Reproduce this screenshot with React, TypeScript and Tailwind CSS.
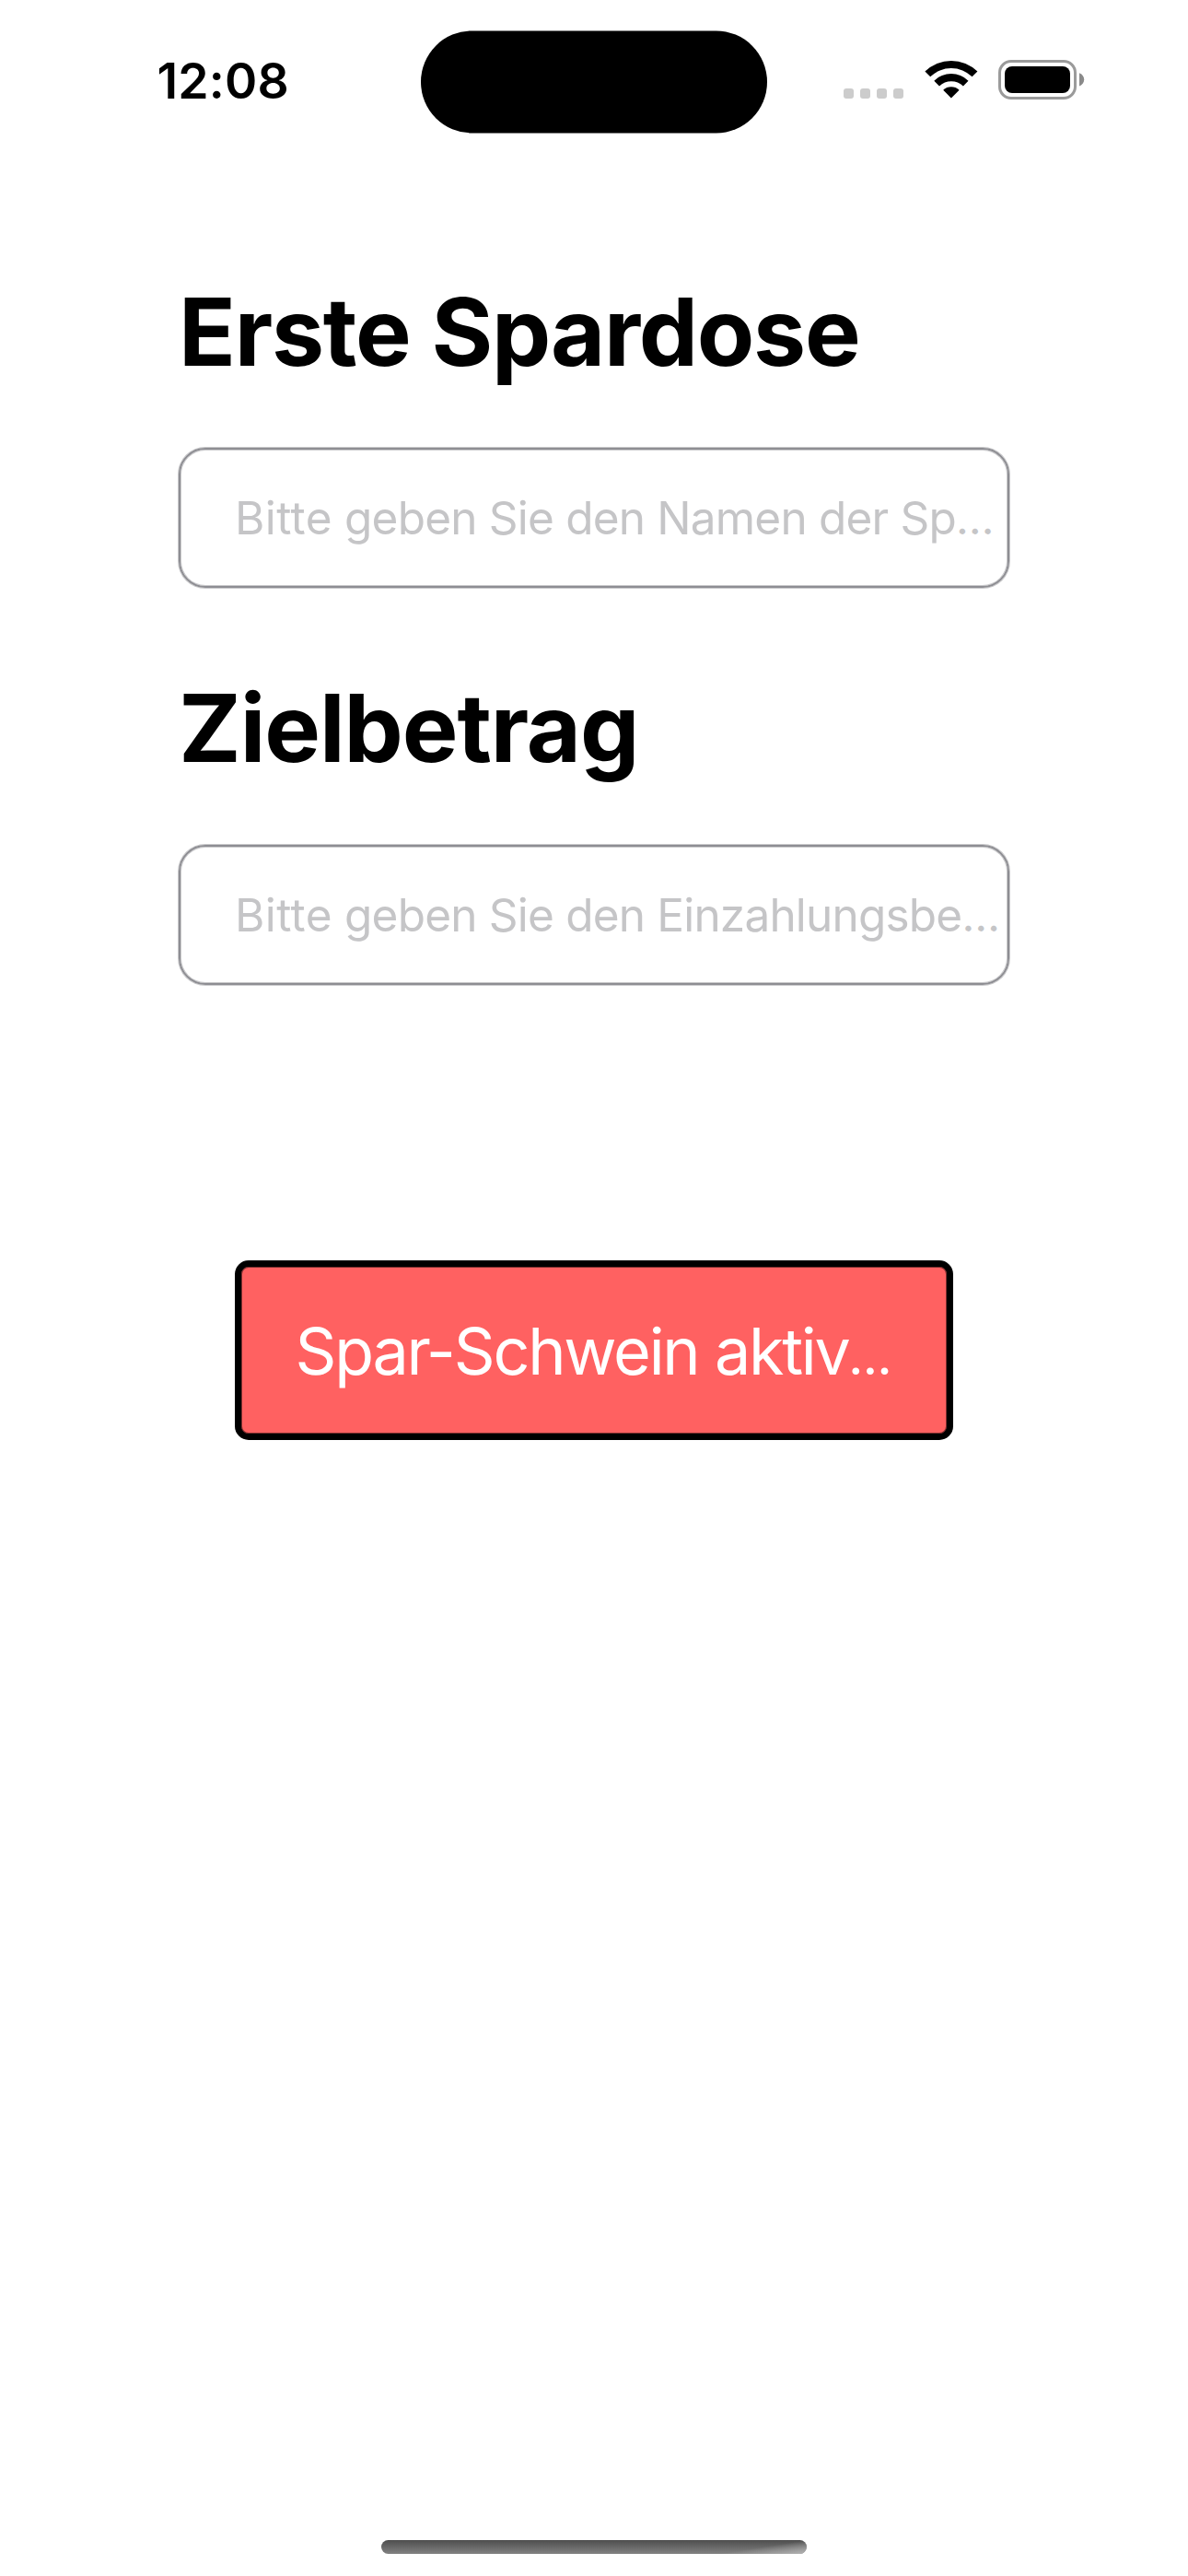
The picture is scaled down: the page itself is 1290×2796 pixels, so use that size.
function WifiIcon() {
  return (
    <svg className="block h-[42px] w-[58px]" viewBox="0 0 58 42" aria-hidden="true">
      <path d="M0.4 12.6 A40.6 40.6 0 0 1 57.4 12.6 L51.6 18.3 A32.4 32.4 0 0 0 6.2 18.3 Z" />
      <path d="M10.3 22.7 A26.6 26.6 0 0 1 47.5 22.7 L41.9 28.4 A18.6 18.6 0 0 0 16 28.4 Z" />
      <path d="M20.2 32.7 A12.6 12.6 0 0 1 37.6 32.7 L28.9 41.6 Z" />
    </svg>
  );
}

function BatteryIcon() {
  return (
    <svg className="block h-[43px] w-[94px]" viewBox="0 0 94 43" aria-hidden="true">
      <rect x="1.5" y="1.5" width="82" height="40" rx="12.5" fill="none" stroke="#9a9a9a" strokeWidth="3" />
      <rect x="7" y="7" width="71" height="29" rx="8" />
      <path d="M88 14.2 C91.4 15.6 93.2 18.2 93.2 21.3 C93.2 24.4 91.4 27.1 88 28.4 Z" fill="#8a8a8a" />
    </svg>
  );
}

function StatusBar() {
  return (
    <header className="flex h-[144px] shrink-0 items-end">
      <div className="flex h-[111px] w-[457px] items-center pb-0.5 pl-[170.5px]">
        <span className="text-[53.5px] leading-none font-semibold tracking-[0.2px]">12:08</span>
      </div>
      <div className="h-[111px] w-[376px] translate-y-[0.4px] rounded-full bg-black" />
      <div className="flex h-[111px] items-start pt-8 pl-[83px]">
        <div className="mt-[31px] flex gap-[7px]">
          <span className="size-[11px] rounded-[3px] bg-[#cccccc]" />
          <span className="size-[11px] rounded-[3px] bg-[#cccccc]" />
          <span className="size-[11px] rounded-[3px] bg-[#cccccc]" />
          <span className="size-[11px] rounded-[3px] bg-[#cccccc]" />
        </div>
        <div className="ml-[23px]">
          <WifiIcon />
        </div>
        <div className="ml-[22px]">
          <BatteryIcon />
        </div>
      </div>
    </header>
  );
}

function Field({ lead, rest }: { lead: string; rest: string }) {
  return (
    <div className="flex h-[152px] items-center rounded-[29px] border-2 border-[#8e8e93] pt-0.5 pl-[59px] text-[49.5px] leading-none whitespace-nowrap text-[#c5c5c7] shadow-[0_0_0_1px_#c9c9cb,inset_0_0_0_1px_#c9c9cb]">
      <p>
        <span className="tracking-[0.4px]">{lead}</span>
        <span className="tracking-[-0.8px]"> {rest}</span>
        <span className="text-[48px] tracking-[-0.8px]">…</span>
      </p>
    </div>
  );
}

export default function App() {
  return (
    <div className="flex h-[2796px] w-[1290px] flex-col overflow-hidden bg-white font-['Inter',sans-serif] text-black">
      <StatusBar />

      <main className="flex flex-1 flex-col px-[194px] pt-[156px]">
        <h1 className="text-[102px] leading-[120px] font-bold tracking-[-1.25px]">Erste Spardose</h1>
        <div className="mt-[66px]">
          <Field lead="Bitte" rest="geben Sie den Namen der Sp" />
        </div>

        <h1 className="mt-[92px] text-[102px] leading-[120px] font-bold tracking-[-1.06px]">Zielbetrag</h1>
        <div className="mt-[67px]">
          <Field lead="Bitte" rest="geben Sie den Einzahlungsbe" />
        </div>

        <button className="mt-[299px] ml-[61px] flex h-[195px] w-[780px] items-center rounded-[15px] border-[7px] border-black bg-[#ff6161] pt-0.5 pl-[58.5px] text-[70px] leading-none font-normal tracking-[-2.25px] whitespace-nowrap text-white shadow-[inset_0_0_0_1px_#803030]">
          <span>
            Spar-Schwein aktiv<span className="text-[49px] font-semibold">…</span>
          </span>
        </button>
      </main>

      <div className="mb-6 ml-[414px] h-[15px] w-[462px] shrink-0 rounded-full bg-linear-to-b from-[#4e4e4e] to-[#828282]">
        <div className="ml-auto h-full w-24 rounded-r-full bg-linear-to-br from-transparent from-50% to-[#b4b4b4]" />
      </div>
    </div>
  );
}
